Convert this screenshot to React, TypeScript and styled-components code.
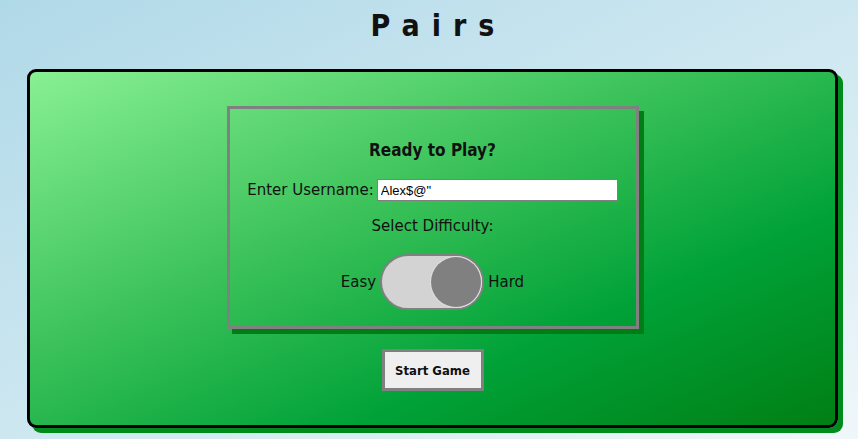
import styled, { createGlobalStyle } from "styled-components";

const GlobalStyle = createGlobalStyle`
  html, body {
    margin: 0;
    padding: 0;
  }
  body {
    min-height: 100vh;
    background: linear-gradient(to bottom right, #b0d9e8 0%, #d3eaf2 60%, #f0f7fb 100%);
    font-family: "DejaVu Sans", "Noto Sans", sans-serif;
    color: #111;
  }
`;

const Page = styled.div`
  display: flex;
  flex-direction: column;
  align-items: stretch;
  padding: 0 20px 0 27px;
  height: 439px;
  box-sizing: border-box;
`;

const Title = styled.h1`
  margin: 8px 0 0;
  height: 61px;
  text-align: center;
  font-family: "DejaVu Sans Condensed", "DejaVu Sans", sans-serif;
  font-size: 30px;
  font-weight: bold;
  letter-spacing: 12px;
  line-height: 36px;
  padding-left: 12px;
  color: #111;
`;

const Board = styled.main`
  flex: none;
  width: 811px;
  height: 359px;
  box-sizing: border-box;
  border: 3px solid #000;
  border-radius: 9px;
  background: linear-gradient(to bottom right, #88f092 0%, #3cc25a 40%, #00a238 70%, #007f14 100%);
  box-shadow: 5px 5px 0 #008c1c;
  display: flex;
  flex-direction: column;
  align-items: center;
  padding-top: 34px;
`;

const Card = styled.section`
  width: 412px;
  height: 223px;
  box-sizing: border-box;
  border: 3px solid #808080;
  box-shadow: 5px 5px 0 #007d14;
  display: flex;
  flex-direction: column;
  align-items: center;
  padding-top: 29px;
`;

const Heading = styled.h2`
  margin: 0;
  font-family: "DejaVu Sans Condensed", "DejaVu Sans", sans-serif;
  font-size: 17px;
  font-weight: bold;
  line-height: 24px;
`;

const Row = styled.div`
  display: flex;
  align-items: center;
  gap: 3px;
  margin-top: 17px;
  font-size: 15px;
`;

const Label = styled.label`
  font-size: 15px;
`;

const Input = styled.input`
  width: 241px;
  height: 22px;
  box-sizing: border-box;
  border: 1px solid #808080;
  padding: 0 3px;
  font-family: "Liberation Sans", Arial, sans-serif;
  font-size: 13px;
  background: #fff;
  color: #000;
  outline: none;
`;

const SubLabel = styled.div`
  margin-top: 15px;
  font-size: 15px;
  line-height: 20px;
`;

const ToggleRow = styled.div`
  display: flex;
  align-items: center;
  gap: 4px;
  margin-top: 18px;
  font-size: 15px;
`;

const Toggle = styled.div<{ $on: boolean }>`
  position: relative;
  width: 104px;
  height: 56px;
  box-sizing: border-box;
  border: 2px solid #808080;
  border-radius: 28px;
  background: #d3d3d3;

  &::after {
    content: "";
    position: absolute;
    top: 1px;
    ${(p) => (p.$on ? "right: 1px;" : "left: 1px;")}
    width: 50px;
    height: 50px;
    border-radius: 50%;
    background: #808080;
    box-shadow: 0 0 0 1px #e0e0e0;
  }
`;

const StartButton = styled.button`
  margin-top: 20px;
  width: 102px;
  height: 42px;
  box-sizing: border-box;
  border: 3px solid #808080;
  background: #efefef;
  font-family: "DejaVu Sans Condensed", "DejaVu Sans", sans-serif;
  font-size: 13px;
  font-weight: bold;
  color: #111;
  cursor: pointer;
`;

export default function App() {
  return (
    <>
      <GlobalStyle />
      <Page>
        <Title>Pairs</Title>
        <Board>
          <Card>
            <Heading>Ready to Play?</Heading>
            <Row>
              <Label htmlFor="username">Enter Username:</Label>
              <Input id="username" defaultValue={'Alex$@"'} />
            </Row>
            <SubLabel>Select Difficulty:</SubLabel>
            <ToggleRow>
              <span>Easy</span>
              <Toggle $on={true} />
              <span>Hard</span>
            </ToggleRow>
          </Card>
          <StartButton>Start Game</StartButton>
        </Board>
      </Page>
    </>
  );
}
